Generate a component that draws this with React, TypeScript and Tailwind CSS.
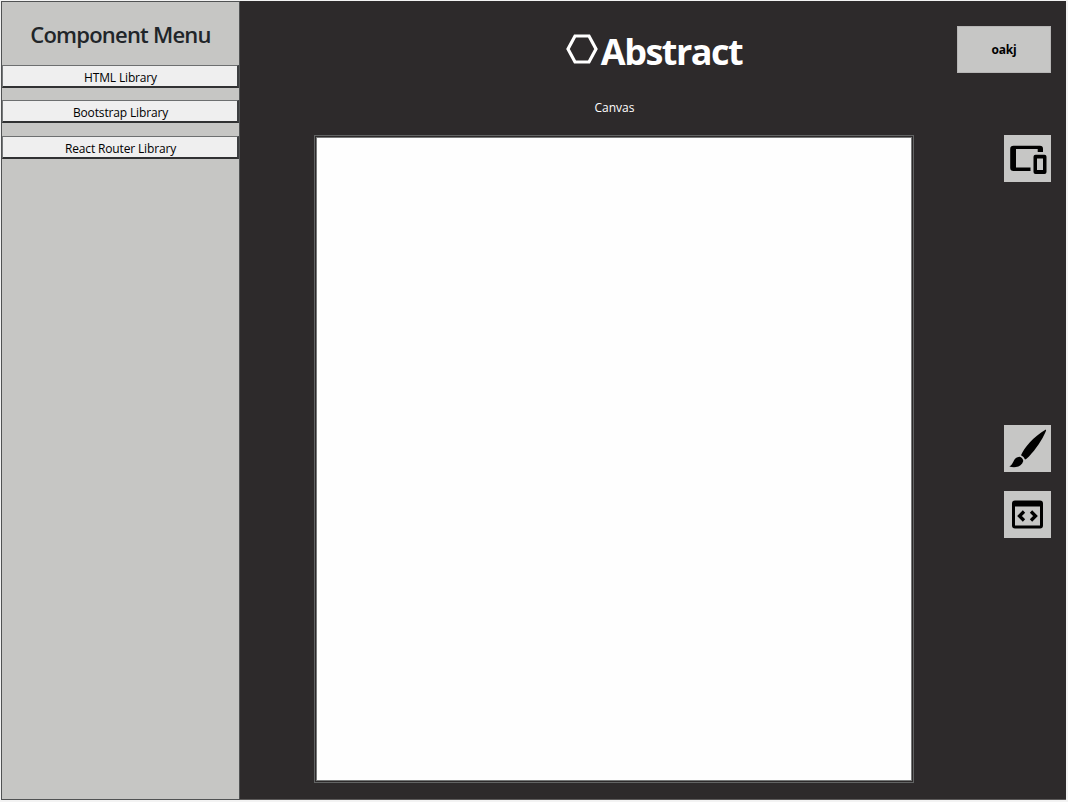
import React from "react";

const libraries = ["HTML Library", "Bootstrap Library", "React Router Library"];

function DevicesIcon() {
  return (
    <svg className="block h-[47px] w-[47px]" viewBox="0 0 47 47" fill="none">
      <path fill="#000" d="M9.500 10.700H36Q39 10.700 39 13.700V17H33.700V14H12V32.500H26.500V36H9.500Q6.200 36 6.200 32.700V14Q6.200 10.700 9.500 10.700Z" />
      <path fill="#000" fillRule="evenodd" d="M31.500 19.700H40.500Q42.500 19.700 42.500 21.700V37Q42.500 39 40.500 39H31.500Q29.500 39 29.500 37V21.700Q29.500 19.700 31.500 19.700ZM33 23.500V35H39V23.500Z" />
    </svg>
  );
}

function BrushIcon() {
  return (
    <svg className="block h-[47px] w-[47px]" viewBox="0 0 47 47">
      <path d="M41.800 4.500Q42.500 5 41.500 7C38 15 32 24 25 31.500Q22.500 34 21 34.500Q20 31.500 17 30.300C20 23 29 12 41.800 4.500Z" />
      <path d="M15.500 31.800Q18.800 32.700 19.300 36C17.500 42 11 43.200 5.300 41.500C10.500 39 8.500 32.500 15.500 31.800Z" />
    </svg>
  );
}

function CodeIcon() {
  return (
    <svg className="block h-[47px] w-[47px]" viewBox="0 0 47 47" fill="none">
      <rect x="9.500" y="11" width="28" height="25" rx="1.500" stroke="#000" strokeWidth="3" />
      <path fill="#000" d="M9 10.500H38V15.500H9Z" />
      <path d="M20 20.500L15.500 25L20 29.500M27 20.500L31.500 25L27 29.500" stroke="#000" strokeWidth="3.300" />
    </svg>
  );
}

export default function App() {
  return (
    <div className="h-[802px] w-[1068px] overflow-hidden bg-[#f3f3f3] pl-px pt-px font-['Open_Sans','Noto_Sans',sans-serif]">
      <div className="flex h-[799px] w-[1065px] border-b border-[#5b5959] bg-[#2d2a2b]">
        <aside className="h-[799px] w-[239px] border border-[#505253] bg-[#c6c6c4]">
          <h1 className="mt-[16px] h-[47px] whitespace-nowrap text-center text-[22px] font-semibold leading-8 tracking-[-0.78px] text-[#212529]">Component Menu</h1>
          <div className="flex flex-col gap-[12.400px]">
            {libraries.map((name) => (
              <button key={name} className="block h-[23px] w-full border border-b-2 border-r-2 border-b-[#303132] border-l-[#77797a] border-r-[#3c3e40] border-t-[#6d6f70] bg-[#efefef] pl-px pt-px text-center text-[12px] leading-[21px] tracking-[-0.15px] text-black">{name}</button>
            ))}
          </div>
        </aside>
        <main className="flex flex-1">
          <section className="ml-[74px] flex w-[600px] flex-col items-center pt-[25px] text-white">
            <div className="ml-[80px] flex h-[52px] items-center">
              <svg className="mr-[3px] mt-[-6px] h-8 w-8" viewBox="0 0 32 32" fill="none">
                <path d="M9 3H23L30 16L23 29H9L2 16Z" stroke="white" strokeWidth="3.200" />
              </svg>
              <span className="text-[36px] font-bold leading-[50px] tracking-[-1.5px]">Abstract</span>
            </div>
            <div className="mt-[20px] h-[20px] pl-px text-[12px] leading-5">Canvas</div>
            <div className="mt-[17px] h-[648px] w-[600px] border border-[#626464] p-px">
              <div className="h-full w-full border border-[#777979] bg-[#fefefe]" />
            </div>
          </section>
          <nav className="ml-auto mr-[15px] flex flex-col items-end pt-[25px]">
            <button className="h-[47px] w-[94px] border border-[#b6b5b5] bg-[#c6c6c5] text-[12px] font-bold tracking-[-0.2px]">oakj</button>
            <button className="mt-[62px] h-[47px] w-[47px] bg-[#c6c6c5]"><DevicesIcon /></button>
            <button className="mt-[243px] h-[47px] w-[47px] bg-[#c6c6c5]"><BrushIcon /></button>
            <button className="mt-[19px] h-[47px] w-[47px] bg-[#c6c6c5]"><CodeIcon /></button>
          </nav>
        </main>
      </div>
    </div>
  );
}
